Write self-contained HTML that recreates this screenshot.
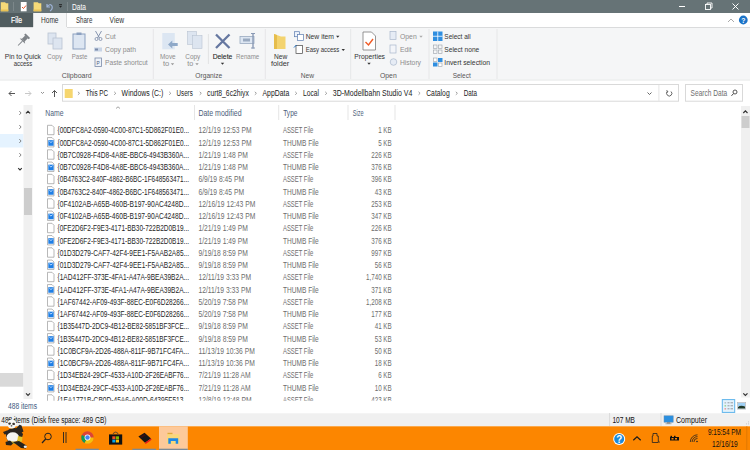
<!DOCTYPE html>
<html><head><meta charset="utf-8"><style>
html,body{margin:0;padding:0;width:750px;height:450px;overflow:hidden;background:#fff}
svg{display:block;font-family:"Liberation Sans", sans-serif}
</style></head><body>
<svg width="750" height="450" viewBox="0 0 750 450">
<rect x="0" y="0" width="750" height="13" fill="#667376" />
<path d="M0.8 2.3 L5 2.3 L6 3.3 L8.3 3.3 L8.3 11.3 L0.8 11.3 Z" fill="#f7da78"/><rect x="0.8" y="9.5" width="7.5" height="1.8" fill="#e9c255"/>
<line x1="13.5" y1="2" x2="13.5" y2="11" stroke="#7c878a" stroke-width="1" />
<rect x="20.8" y="2" width="5.8" height="9.3" fill="#ffffff" />
<path d="M22 7 L23.5 8.5 L26 5.5" stroke="#e8562a" stroke-width="1" fill="none"/>
<path d="M33.6 2.3 L37.8 2.3 L38.8 3.3 L41.3 3.3 L41.3 11.3 L33.6 11.3 Z" fill="#f7da78"/><rect x="33.6" y="9.5" width="7.7" height="1.8" fill="#e9c255"/>
<path d="M47 4 L47 7 L50 7 M47 7 Q50 3 52 6 Q53 9 50 11" stroke="#9fb4d8" stroke-width="1.2" fill="none"/>
<path d="M58.80 5.80 L62.20 5.80 L60.50 7.80 Z" fill="#222"/>
<line x1="59" y1="4.5" x2="62" y2="4.5" stroke="#222" stroke-width="0.8" />
<line x1="67.5" y1="2" x2="67.5" y2="11" stroke="#7c878a" stroke-width="1" />
<text x="72.00" y="10" font-size="8.3" fill="#ffffff" font-weight="normal"  textLength="14.00" lengthAdjust="spacingAndGlyphs" >Data</text>
<line x1="679" y1="6.5" x2="685" y2="6.5" stroke="#ffffff" stroke-width="1" />
<rect x="705.5" y="4.5" width="5" height="5" fill="none" stroke="#fff" stroke-width="0.9"/><path d="M707 4.5 V3 H712 V8 H710.5" fill="none" stroke="#fff" stroke-width="0.9"/>
<path d="M732.5 3.5 L738.5 9.5 M738.5 3.5 L732.5 9.5" stroke="#fff" stroke-width="1"/>
<rect x="0" y="13" width="750" height="14" fill="#ffffff" />
<rect x="0" y="13" width="33" height="14" fill="#505c5f" />
<text x="11.00" y="22.8" font-size="8.3" fill="#ffffff" font-weight="normal" stroke="#ffffff" stroke-width="0.2" textLength="11.00" lengthAdjust="spacingAndGlyphs" >File</text>
<rect x="33" y="13" width="34" height="15" fill="#f5f6f7" />
<line x1="33.5" y1="13" x2="33.5" y2="27" stroke="#dadbdc" stroke-width="1" />
<line x1="66.5" y1="13" x2="66.5" y2="27" stroke="#dadbdc" stroke-width="1" />
<text x="41.00" y="22.8" font-size="8.3" fill="#333333" font-weight="normal"  textLength="17.50" lengthAdjust="spacingAndGlyphs" >Home</text>
<text x="76.00" y="22.8" font-size="8.3" fill="#333333" font-weight="normal"  textLength="16.30" lengthAdjust="spacingAndGlyphs" >Share</text>
<text x="109.60" y="22.8" font-size="8.3" fill="#333333" font-weight="normal"  textLength="14.40" lengthAdjust="spacingAndGlyphs" >View</text>
<path d="M728 22 L731 19 L734 22" stroke="#a0a0a0" stroke-width="0.9" fill="none"/>
<circle cx="743.3" cy="20" r="4.4" fill="#1a73c8"/>
<text x="741.20" y="23" font-size="7" fill="#ffffff" font-weight="bold"  textLength="4.20" lengthAdjust="spacingAndGlyphs" >?</text>
<rect x="0" y="27" width="750" height="53" fill="#f5f6f7" />
<line x1="0" y1="27.5" x2="33" y2="27.5" stroke="#dadbdc" stroke-width="1" />
<line x1="67" y1="27.5" x2="750" y2="27.5" stroke="#dadbdc" stroke-width="1" />
<line x1="0" y1="80.2" x2="750" y2="80.2" stroke="#e3e4e5" stroke-width="1" />
<line x1="153.3" y1="29" x2="153.3" y2="79" stroke="#e6e7e8" stroke-width="1" />
<line x1="265.3" y1="29" x2="265.3" y2="79" stroke="#e6e7e8" stroke-width="1" />
<line x1="350.7" y1="29" x2="350.7" y2="79" stroke="#e6e7e8" stroke-width="1" />
<line x1="429" y1="29" x2="429" y2="79" stroke="#e6e7e8" stroke-width="1" />
<line x1="497" y1="29" x2="497" y2="79" stroke="#e6e7e8" stroke-width="1" />
<text x="61.70" y="78.1" font-size="7.7" fill="#555" font-weight="normal"  textLength="30.00" lengthAdjust="spacingAndGlyphs" >Clipboard</text>
<text x="195.30" y="78.1" font-size="7.7" fill="#555" font-weight="normal"  textLength="27.00" lengthAdjust="spacingAndGlyphs" >Organize</text>
<text x="300.70" y="78.1" font-size="7.7" fill="#555" font-weight="normal"  textLength="13.30" lengthAdjust="spacingAndGlyphs" >New</text>
<text x="380.00" y="78.1" font-size="7.7" fill="#555" font-weight="normal"  textLength="16.70" lengthAdjust="spacingAndGlyphs" >Open</text>
<text x="452.70" y="78.1" font-size="7.7" fill="#555" font-weight="normal"  textLength="18.00" lengthAdjust="spacingAndGlyphs" >Select</text>
<g transform="translate(23,40.5) rotate(45)" fill="#7d8287"><rect x="-3.2" y="-6.8" width="6.4" height="2"/><rect x="-1.9" y="-5" width="3.8" height="4.6"/><path d="M-3.8 0.8 L3.8 0.8 L1.9 -0.6 L-1.9 -0.6 Z"/><rect x="-0.45" y="0.8" width="0.9" height="6.2"/></g>
<text x="4.70" y="59.0" font-size="7.7" fill="#333" font-weight="normal"  textLength="36.30" lengthAdjust="spacingAndGlyphs" >Pin to Quick</text>
<text x="13.70" y="66.4" font-size="7.7" fill="#333" font-weight="normal"  textLength="18.60" lengthAdjust="spacingAndGlyphs" >access</text>
<rect x="48" y="33" width="8" height="11" fill="#dde5f0" stroke="#b9c4d2" stroke-width="0.8"/>
<rect x="53" y="38" width="9" height="11" fill="#dde5f0" stroke="#b9c4d2" stroke-width="0.8"/>
<text x="47.00" y="59.0" font-size="7.7" fill="#8d8d8d" font-weight="normal"  textLength="15.30" lengthAdjust="spacingAndGlyphs" >Copy</text>
<rect x="73" y="34" width="12" height="15" fill="#dde6f2" stroke="#8ba0c0" stroke-width="1"/>
<rect x="76.5" y="32.5" width="5" height="2.5" fill="#8ba0c0" />
<text x="71.70" y="59.0" font-size="7.7" fill="#8d8d8d" font-weight="normal"  textLength="15.60" lengthAdjust="spacingAndGlyphs" >Paste</text>
<path d="M95.5 31 L99.5 38 M101.5 31 L97.5 38" stroke="#7a8aa8" stroke-width="0.9"/><circle cx="96.5" cy="39" r="1.5" fill="none" stroke="#7a8aa8" stroke-width="0.8"/><circle cx="100.5" cy="39" r="1.5" fill="none" stroke="#7a8aa8" stroke-width="0.8"/>
<text x="105.00" y="38.8" font-size="7.7" fill="#8d8d8d" font-weight="normal"  textLength="10.70" lengthAdjust="spacingAndGlyphs" >Cut</text>
<rect x="94" y="47.5" width="8" height="4" fill="#c8d4e6" />
<rect x="95" y="48.5" width="3" height="2" fill="#7a8aa8" />
<text x="105.00" y="52.1" font-size="7.7" fill="#8d8d8d" font-weight="normal"  textLength="31.00" lengthAdjust="spacingAndGlyphs" >Copy path</text>
<rect x="95" y="58" width="6.5" height="8.5" fill="#eef2f8" stroke="#7a8aa8" stroke-width="0.8"/>
<text x="96.60" y="64.5" font-size="5.5" fill="#4a5a7a" font-weight="normal"  textLength="3.20" lengthAdjust="spacingAndGlyphs" >P</text>
<text x="105.00" y="64.9" font-size="7.7" fill="#8d8d8d" font-weight="normal"  textLength="42.70" lengthAdjust="spacingAndGlyphs" >Paste shortcut</text>
<rect x="162.3" y="33" width="12.5" height="16.3" fill="#dce6f2" />
<path d="M168 44.5 L172.3 40.5 L172.3 43 L177.7 43 L177.7 46 L172.3 46 L172.3 48.5 Z" fill="#8fa9c8"/>
<text x="160.00" y="59.0" font-size="7.7" fill="#8d8d8d" font-weight="normal"  textLength="15.70" lengthAdjust="spacingAndGlyphs" >Move</text>
<text x="163.00" y="66.4" font-size="7.7" fill="#8d8d8d" font-weight="normal"  textLength="6.30" lengthAdjust="spacingAndGlyphs" >to</text>
<path d="M170.80 63.30 L174.20 63.30 L172.50 65.30 Z" fill="#999"/>
<rect x="187.5" y="31.5" width="9" height="13" fill="#dde5f0" stroke="#b9c4d2" stroke-width="0.6"/>
<rect x="192.5" y="35.5" width="9.5" height="13" fill="#dde5f0" stroke="#b9c4d2" stroke-width="0.6"/>
<text x="185.30" y="59.0" font-size="7.7" fill="#8d8d8d" font-weight="normal"  textLength="15.00" lengthAdjust="spacingAndGlyphs" >Copy</text>
<text x="187.30" y="66.4" font-size="7.7" fill="#8d8d8d" font-weight="normal"  textLength="6.00" lengthAdjust="spacingAndGlyphs" >to</text>
<path d="M195.30 63.30 L198.70 63.30 L197.00 65.30 Z" fill="#999"/>
<line x1="208.4" y1="34" x2="208.4" y2="64" stroke="#e2e3e4" stroke-width="1" />
<path d="M216 34.5 L229.5 48 M229.5 34.5 L216 48" stroke="#6577a0" stroke-width="2.3"/>
<text x="212.70" y="59.0" font-size="7.7" fill="#222" font-weight="normal" stroke="#222" stroke-width="0.1" textLength="19.60" lengthAdjust="spacingAndGlyphs" >Delete</text>
<path d="M220.80 62.80 L224.20 62.80 L222.50 64.80 Z" fill="#333"/>
<rect x="240" y="36.5" width="14" height="7" fill="#dde6f2" stroke="#9aaac0" stroke-width="0.8"/>
<rect x="243" y="38.5" width="7" height="3" fill="#9aaac0" />
<line x1="253" y1="33" x2="253" y2="48.5" stroke="#8a9ab5" stroke-width="1.4" />
<line x1="251" y1="33.5" x2="255" y2="33.5" stroke="#8a9ab5" stroke-width="1" />
<line x1="251" y1="48" x2="255" y2="48" stroke="#8a9ab5" stroke-width="1" />
<text x="236.00" y="59.0" font-size="7.7" fill="#8d8d8d" font-weight="normal"  textLength="23.30" lengthAdjust="spacingAndGlyphs" >Rename</text>
<path d="M274 34 L281 36.5 L285.5 36.5 L285.5 49 L274 49 Z" fill="#f3d36f"/><path d="M274 34 L277 35 L277 49 L274 49 Z" fill="#e6bd4c"/>
<text x="274.00" y="59.0" font-size="7.7" fill="#333" font-weight="normal"  textLength="13.30" lengthAdjust="spacingAndGlyphs" >New</text>
<text x="271.00" y="66.4" font-size="7.7" fill="#333" font-weight="normal"  textLength="18.30" lengthAdjust="spacingAndGlyphs" >folder</text>
<rect x="294.5" y="31.7" width="5" height="5" fill="#eef3fb" stroke="#5a7bb0" stroke-width="0.7"/>
<rect x="297.5" y="34.5" width="6" height="6" fill="#ffffff" stroke="#5a7bb0" stroke-width="0.7"/>
<text x="305.70" y="38.8" font-size="7.7" fill="#333" font-weight="normal"  textLength="28.30" lengthAdjust="spacingAndGlyphs" >New item</text>
<path d="M336.05 35.80 L339.45 35.80 L337.75 37.80 Z" fill="#333"/>
<rect x="296" y="45.5" width="6.5" height="8" fill="#ffffff" stroke="#444" stroke-width="0.7"/>
<path d="M294 47.5 L296.5 45" stroke="#1b6fc8" stroke-width="1"/>
<text x="305.70" y="52.1" font-size="7.7" fill="#333" font-weight="normal"  textLength="33.60" lengthAdjust="spacingAndGlyphs" >Easy access</text>
<path d="M341.55 49.00 L344.95 49.00 L343.25 51.00 Z" fill="#333"/>
<path d="M363 32 L371.5 32 L375.5 36 L375.5 50 L363 50 Z" fill="#fff" stroke="#7c7c7c" stroke-width="0.8"/><path d="M365.5 42 L368.5 45 L373 39" stroke="#f05a24" stroke-width="1.4" fill="none"/>
<text x="354.30" y="59.0" font-size="7.7" fill="#333" font-weight="normal"  textLength="30.70" lengthAdjust="spacingAndGlyphs" >Properties</text>
<path d="M367.30 62.80 L370.70 62.80 L369.00 64.80 Z" fill="#333"/>
<rect x="390" y="31.5" width="6" height="8" fill="#e6ecf5" stroke="#a9b7cc" stroke-width="0.7"/>
<text x="400.00" y="38.8" font-size="7.7" fill="#8d8d8d" font-weight="normal"  textLength="16.70" lengthAdjust="spacingAndGlyphs" >Open</text>
<path d="M419.30 35.80 L422.70 35.80 L421.00 37.80 Z" fill="#aaa"/>
<rect x="390" y="45" width="6" height="8" fill="#f3f5f9" stroke="#a9b7cc" stroke-width="0.7"/>
<text x="400.00" y="52.1" font-size="7.7" fill="#8d8d8d" font-weight="normal"  textLength="11.70" lengthAdjust="spacingAndGlyphs" >Edit</text>
<circle cx="393.5" cy="62" r="3.3" fill="#e6ecf5" stroke="#a9b7cc" stroke-width="0.7"/>
<text x="400.00" y="64.9" font-size="7.7" fill="#8d8d8d" font-weight="normal"  textLength="21.00" lengthAdjust="spacingAndGlyphs" >History</text>
<rect x="433" y="31.5" width="9.5" height="9.5" fill="#2f8ee0" />
<line x1="437.75" y1="31.5" x2="437.75" y2="41" stroke="#fff" stroke-width="0.8" />
<line x1="433" y1="36.25" x2="442.5" y2="36.25" stroke="#fff" stroke-width="0.8" />
<text x="444.30" y="38.8" font-size="7.7" fill="#333" font-weight="normal"  textLength="26.40" lengthAdjust="spacingAndGlyphs" >Select all</text>
<g stroke="#9aa0a8" stroke-width="0.6" fill="none"><rect x="433.5" y="45" width="3.5" height="3.5"/><rect x="438.5" y="45" width="3.5" height="3.5"/><rect x="433.5" y="50" width="3.5" height="3.5"/><rect x="438.5" y="50" width="3.5" height="3.5"/></g>
<text x="444.30" y="52.1" font-size="7.7" fill="#333" font-weight="normal"  textLength="35.00" lengthAdjust="spacingAndGlyphs" >Select none</text>
<g><rect x="433.5" y="58" width="3.5" height="3.5" fill="#fff" stroke="#9aa0a8" stroke-width="0.6"/><rect x="438" y="58" width="4.5" height="4" fill="#2f8ee0"/><rect x="433" y="62.5" width="4.5" height="4" fill="#2f8ee0"/><rect x="438.5" y="63" width="3.5" height="3.5" fill="#fff" stroke="#9aa0a8" stroke-width="0.6"/></g>
<text x="444.30" y="64.9" font-size="7.7" fill="#333" font-weight="normal"  textLength="45.70" lengthAdjust="spacingAndGlyphs" >Invert selection</text>
<rect x="0" y="80.7" width="750" height="23.3" fill="#ffffff" />
<path d="M9 93.5 L15 93.5 M11.5 91 L9 93.5 L11.5 96" stroke="#555" stroke-width="1" fill="none"/>
<path d="M25 93.5 L31 93.5 M28.5 91 L31 93.5 L28.5 96" stroke="#c8c8c8" stroke-width="1" fill="none"/>
<path d="M41 92 L42.5 93.5 L44 92" stroke="#777" stroke-width="0.8" fill="none"/>
<path d="M54.5 97 L54.5 90.5 M52 93 L54.5 90.5 L57 93" stroke="#555" stroke-width="1" fill="none"/>
<rect x="62.5" y="84.5" width="616" height="16.7" fill="#ffffff" stroke="#d9d9d9" stroke-width="1"/>
<rect x="64.7" y="89" width="8" height="9" fill="#f6d66f" />
<path d="M77.9 91.8 L79.5 93.3 L77.9 94.8" stroke="#777" stroke-width="0.7" fill="none"/>
<path d="M114.2 91.8 L115.8 93.3 L114.2 94.8" stroke="#777" stroke-width="0.7" fill="none"/>
<path d="M169.2 91.8 L170.8 93.3 L169.2 94.8" stroke="#777" stroke-width="0.7" fill="none"/>
<path d="M199.7 91.8 L201.3 93.3 L199.7 94.8" stroke="#777" stroke-width="0.7" fill="none"/>
<path d="M254.79999999999998 91.8 L256.4 93.3 L254.79999999999998 94.8" stroke="#777" stroke-width="0.7" fill="none"/>
<path d="M295.2 91.8 L296.8 93.3 L295.2 94.8" stroke="#777" stroke-width="0.7" fill="none"/>
<path d="M325.2 91.8 L326.8 93.3 L325.2 94.8" stroke="#777" stroke-width="0.7" fill="none"/>
<path d="M418.5 91.8 L420.1 93.3 L418.5 94.8" stroke="#777" stroke-width="0.7" fill="none"/>
<path d="M455.8 91.8 L457.40000000000003 93.3 L455.8 94.8" stroke="#777" stroke-width="0.7" fill="none"/>
<text x="85.70" y="96" font-size="8.3" fill="#222" font-weight="normal"  textLength="22.40" lengthAdjust="spacingAndGlyphs" >This PC</text>
<text x="121.60" y="96" font-size="8.3" fill="#222" font-weight="normal"  textLength="41.60" lengthAdjust="spacingAndGlyphs" >Windows (C:)</text>
<text x="176.60" y="96" font-size="8.3" fill="#222" font-weight="normal"  textLength="16.20" lengthAdjust="spacingAndGlyphs" >Users</text>
<text x="207.00" y="96" font-size="8.3" fill="#222" font-weight="normal"  textLength="41.90" lengthAdjust="spacingAndGlyphs" >curt8_6c2hiyx</text>
<text x="262.50" y="96" font-size="8.3" fill="#222" font-weight="normal"  textLength="26.70" lengthAdjust="spacingAndGlyphs" >AppData</text>
<text x="303.00" y="96" font-size="8.3" fill="#222" font-weight="normal"  textLength="16.00" lengthAdjust="spacingAndGlyphs" >Local</text>
<text x="332.80" y="96" font-size="8.3" fill="#222" font-weight="normal"  textLength="79.60" lengthAdjust="spacingAndGlyphs" >3D-Modellbahn Studio V4</text>
<text x="426.20" y="96" font-size="8.3" fill="#222" font-weight="normal"  textLength="23.50" lengthAdjust="spacingAndGlyphs" >Catalog</text>
<text x="463.70" y="96" font-size="8.3" fill="#222" font-weight="normal"  textLength="13.30" lengthAdjust="spacingAndGlyphs" >Data</text>
<path d="M647.5 92.5 L649.5 94.5 L651.5 92.5" stroke="#555" stroke-width="0.9" fill="none"/>
<line x1="658.9" y1="85" x2="658.9" y2="101" stroke="#e5e5e5" stroke-width="1" />
<path d="M671 91.5 A2.6 2.6 0 1 1 667.5 91.5" stroke="#555" stroke-width="0.9" fill="none"/><path d="M666.5 90 L668 91.8 L666 92.3" stroke="#555" stroke-width="0.8" fill="none"/>
<rect x="685.5" y="84.5" width="57" height="16.7" fill="#ffffff" stroke="#d9d9d9" stroke-width="1"/>
<text x="690.60" y="96" font-size="8.3" fill="#6d6d6d" font-weight="normal"  textLength="36.60" lengthAdjust="spacingAndGlyphs" >Search Data</text>
<circle cx="735" cy="92" r="2" fill="none" stroke="#444" stroke-width="0.9"/><path d="M733.5 93.6 L731.5 95.8" stroke="#444" stroke-width="1"/>
<rect x="0" y="104" width="750" height="309" fill="#ffffff" />
<rect x="0" y="134" width="23.5" height="13.5" fill="#e5f3ff" />
<path d="M19.3 111.1 L21.1 113 L19.3 114.9" stroke="#777" stroke-width="0.9" fill="none"/>
<path d="M19.3 125.1 L21.1 127 L19.3 128.9" stroke="#777" stroke-width="0.9" fill="none"/>
<path d="M19.3 139.1 L21.1 141 L19.3 142.9" stroke="#777" stroke-width="0.9" fill="none"/>
<path d="M19.3 153.1 L21.1 155 L19.3 156.9" stroke="#777" stroke-width="0.9" fill="none"/>
<path d="M18.2 168.2 L20 170 L21.8 168.2" stroke="#333" stroke-width="1.1" fill="none"/>
<rect x="0" y="373" width="23.5" height="13.7" fill="#d9d9d9" />
<rect x="23.5" y="105" width="9" height="294" fill="#f0f0f0" />
<path d="M26 113.3 L28 111.3 L30 113.3" stroke="#333" stroke-width="1.2" fill="none"/>
<rect x="24" y="188" width="8" height="27" fill="#cdcdcd" />
<path d="M26 393.3 L28 395.3 L30 393.3" stroke="#333" stroke-width="1.2" fill="none"/>
<text x="45.30" y="116.2" font-size="8.3" fill="#4c607a" font-weight="normal"  textLength="18.20" lengthAdjust="spacingAndGlyphs" >Name</text>
<path d="M116 108.5 L118 106.8 L120 108.5" stroke="#8a8a8a" stroke-width="0.8" fill="none"/>
<line x1="194.5" y1="105" x2="194.5" y2="120" stroke="#e5e5e5" stroke-width="1" />
<text x="198.40" y="116.2" font-size="8.3" fill="#4c607a" font-weight="normal"  textLength="43.20" lengthAdjust="spacingAndGlyphs" >Date modified</text>
<line x1="278.7" y1="105" x2="278.7" y2="120" stroke="#e5e5e5" stroke-width="1" />
<text x="283.20" y="116.2" font-size="8.3" fill="#4c607a" font-weight="normal"  textLength="14.30" lengthAdjust="spacingAndGlyphs" >Type</text>
<line x1="348" y1="105" x2="348" y2="120" stroke="#e5e5e5" stroke-width="1" />
<text x="352.70" y="116.2" font-size="8.3" fill="#4c607a" font-weight="normal"  textLength="10.80" lengthAdjust="spacingAndGlyphs" >Size</text>
<line x1="395" y1="105" x2="395" y2="120" stroke="#e5e5e5" stroke-width="1" />
<defs><clipPath id="lc"><rect x="33" y="121" width="707" height="279.7"/></clipPath></defs><g clip-path="url(#lc)">
<path d="M47.5 125.30000000000001 L52 125.30000000000001 L54 127.30000000000001 L54 134.70000000000002 L47.5 134.70000000000002 Z" fill="#fff" stroke="#9a9a9a" stroke-width="0.7"/>
<text x="57.50" y="133.3" font-size="8.3" fill="#262626" font-weight="normal"  textLength="131.50" lengthAdjust="spacingAndGlyphs" >{00DFC8A2-0590-4C00-87C1-5D862F01E0...</text>
<text x="198.40" y="133.3" font-size="8.3" fill="#6d6d6d" font-weight="normal"  textLength="53.16" lengthAdjust="spacingAndGlyphs" >12/1/19 12:53 PM</text>
<text x="283.00" y="133.3" font-size="8.3" fill="#6d6d6d" font-weight="normal"  textLength="30.30" lengthAdjust="spacingAndGlyphs" >ASSET File</text>
<text x="378.18" y="133.3" font-size="8.3" fill="#6d6d6d" font-weight="normal"  textLength="13.52" lengthAdjust="spacingAndGlyphs" >1 KB</text>
<path d="M47.5 137.55 L52 137.55 L54 139.55 L54 146.95000000000002 L47.5 146.95000000000002 Z" fill="#fff" stroke="#9a9a9a" stroke-width="0.7"/><rect x="48.3" y="140.15" width="5.3" height="5.6" fill="#1f7fe6"/><path d="M49.3 141.15 L50.95 142.55 L52.6 141.15" stroke="#fff" stroke-width="0.7" fill="none"/>
<text x="57.50" y="145.55" font-size="8.3" fill="#262626" font-weight="normal"  textLength="131.50" lengthAdjust="spacingAndGlyphs" >{00DFC8A2-0590-4C00-87C1-5D862F01E0...</text>
<text x="198.40" y="145.55" font-size="8.3" fill="#6d6d6d" font-weight="normal"  textLength="53.16" lengthAdjust="spacingAndGlyphs" >12/1/19 12:53 PM</text>
<text x="283.00" y="145.55" font-size="8.3" fill="#6d6d6d" font-weight="normal"  textLength="35.70" lengthAdjust="spacingAndGlyphs" >THUMB File</text>
<text x="378.18" y="145.55" font-size="8.3" fill="#6d6d6d" font-weight="normal"  textLength="13.52" lengthAdjust="spacingAndGlyphs" >5 KB</text>
<path d="M47.5 149.8 L52 149.8 L54 151.8 L54 159.20000000000002 L47.5 159.20000000000002 Z" fill="#fff" stroke="#9a9a9a" stroke-width="0.7"/>
<text x="57.50" y="157.8" font-size="8.3" fill="#262626" font-weight="normal"  textLength="131.50" lengthAdjust="spacingAndGlyphs" >{0B7C0928-F4D8-4A8E-BBC6-4943B360A...</text>
<text x="198.40" y="157.8" font-size="8.3" fill="#6d6d6d" font-weight="normal"  textLength="49.41" lengthAdjust="spacingAndGlyphs" >1/21/19 1:48 PM</text>
<text x="283.00" y="157.8" font-size="8.3" fill="#6d6d6d" font-weight="normal"  textLength="30.30" lengthAdjust="spacingAndGlyphs" >ASSET File</text>
<text x="371.24" y="157.8" font-size="8.3" fill="#6d6d6d" font-weight="normal"  textLength="20.46" lengthAdjust="spacingAndGlyphs" >226 KB</text>
<path d="M47.5 162.05 L52 162.05 L54 164.05 L54 171.45000000000002 L47.5 171.45000000000002 Z" fill="#fff" stroke="#9a9a9a" stroke-width="0.7"/><rect x="48.3" y="164.65" width="5.3" height="5.6" fill="#1f7fe6"/><path d="M49.3 165.65 L50.95 167.05 L52.6 165.65" stroke="#fff" stroke-width="0.7" fill="none"/>
<text x="57.50" y="170.05" font-size="8.3" fill="#262626" font-weight="normal"  textLength="131.50" lengthAdjust="spacingAndGlyphs" >{0B7C0928-F4D8-4A8E-BBC6-4943B360A...</text>
<text x="198.40" y="170.05" font-size="8.3" fill="#6d6d6d" font-weight="normal"  textLength="49.41" lengthAdjust="spacingAndGlyphs" >1/21/19 1:48 PM</text>
<text x="283.00" y="170.05" font-size="8.3" fill="#6d6d6d" font-weight="normal"  textLength="35.70" lengthAdjust="spacingAndGlyphs" >THUMB File</text>
<text x="371.24" y="170.05" font-size="8.3" fill="#6d6d6d" font-weight="normal"  textLength="20.46" lengthAdjust="spacingAndGlyphs" >376 KB</text>
<path d="M47.5 174.3 L52 174.3 L54 176.3 L54 183.70000000000002 L47.5 183.70000000000002 Z" fill="#fff" stroke="#9a9a9a" stroke-width="0.7"/>
<text x="57.50" y="182.3" font-size="8.3" fill="#262626" font-weight="normal"  textLength="131.50" lengthAdjust="spacingAndGlyphs" >{0B4763C2-840F-4862-B6BC-1F648563471...</text>
<text x="198.40" y="182.3" font-size="8.3" fill="#6d6d6d" font-weight="normal"  textLength="45.67" lengthAdjust="spacingAndGlyphs" >6/9/19 8:45 PM</text>
<text x="283.00" y="182.3" font-size="8.3" fill="#6d6d6d" font-weight="normal"  textLength="30.30" lengthAdjust="spacingAndGlyphs" >ASSET File</text>
<text x="371.24" y="182.3" font-size="8.3" fill="#6d6d6d" font-weight="normal"  textLength="20.46" lengthAdjust="spacingAndGlyphs" >396 KB</text>
<path d="M47.5 186.55 L52 186.55 L54 188.55 L54 195.95000000000002 L47.5 195.95000000000002 Z" fill="#fff" stroke="#9a9a9a" stroke-width="0.7"/><rect x="48.3" y="189.15" width="5.3" height="5.6" fill="#1f7fe6"/><path d="M49.3 190.15 L50.95 191.55 L52.6 190.15" stroke="#fff" stroke-width="0.7" fill="none"/>
<text x="57.50" y="194.55" font-size="8.3" fill="#262626" font-weight="normal"  textLength="131.50" lengthAdjust="spacingAndGlyphs" >{0B4763C2-840F-4862-B6BC-1F648563471...</text>
<text x="198.40" y="194.55" font-size="8.3" fill="#6d6d6d" font-weight="normal"  textLength="45.67" lengthAdjust="spacingAndGlyphs" >6/9/19 8:45 PM</text>
<text x="283.00" y="194.55" font-size="8.3" fill="#6d6d6d" font-weight="normal"  textLength="35.70" lengthAdjust="spacingAndGlyphs" >THUMB File</text>
<text x="374.71" y="194.55" font-size="8.3" fill="#6d6d6d" font-weight="normal"  textLength="16.99" lengthAdjust="spacingAndGlyphs" >43 KB</text>
<path d="M47.5 198.8 L52 198.8 L54 200.8 L54 208.20000000000002 L47.5 208.20000000000002 Z" fill="#fff" stroke="#9a9a9a" stroke-width="0.7"/>
<text x="57.50" y="206.8" font-size="8.3" fill="#262626" font-weight="normal"  textLength="131.50" lengthAdjust="spacingAndGlyphs" >{0F4102AB-A65B-460B-B197-90AC4248D...</text>
<text x="198.40" y="206.8" font-size="8.3" fill="#6d6d6d" font-weight="normal"  textLength="56.90" lengthAdjust="spacingAndGlyphs" >12/16/19 12:43 PM</text>
<text x="283.00" y="206.8" font-size="8.3" fill="#6d6d6d" font-weight="normal"  textLength="30.30" lengthAdjust="spacingAndGlyphs" >ASSET File</text>
<text x="371.24" y="206.8" font-size="8.3" fill="#6d6d6d" font-weight="normal"  textLength="20.46" lengthAdjust="spacingAndGlyphs" >253 KB</text>
<path d="M47.5 211.05 L52 211.05 L54 213.05 L54 220.45000000000002 L47.5 220.45000000000002 Z" fill="#fff" stroke="#9a9a9a" stroke-width="0.7"/><rect x="48.3" y="213.65" width="5.3" height="5.6" fill="#1f7fe6"/><path d="M49.3 214.65 L50.95 216.05 L52.6 214.65" stroke="#fff" stroke-width="0.7" fill="none"/>
<text x="57.50" y="219.05" font-size="8.3" fill="#262626" font-weight="normal"  textLength="131.50" lengthAdjust="spacingAndGlyphs" >{0F4102AB-A65B-460B-B197-90AC4248D...</text>
<text x="198.40" y="219.05" font-size="8.3" fill="#6d6d6d" font-weight="normal"  textLength="56.90" lengthAdjust="spacingAndGlyphs" >12/16/19 12:43 PM</text>
<text x="283.00" y="219.05" font-size="8.3" fill="#6d6d6d" font-weight="normal"  textLength="35.70" lengthAdjust="spacingAndGlyphs" >THUMB File</text>
<text x="371.24" y="219.05" font-size="8.3" fill="#6d6d6d" font-weight="normal"  textLength="20.46" lengthAdjust="spacingAndGlyphs" >347 KB</text>
<path d="M47.5 223.3 L52 223.3 L54 225.3 L54 232.70000000000002 L47.5 232.70000000000002 Z" fill="#fff" stroke="#9a9a9a" stroke-width="0.7"/>
<text x="57.50" y="231.3" font-size="8.3" fill="#262626" font-weight="normal"  textLength="131.50" lengthAdjust="spacingAndGlyphs" >{0FE2D6F2-F9E3-4171-BB30-722B2D0B19...</text>
<text x="198.40" y="231.3" font-size="8.3" fill="#6d6d6d" font-weight="normal"  textLength="49.41" lengthAdjust="spacingAndGlyphs" >1/21/19 1:49 PM</text>
<text x="283.00" y="231.3" font-size="8.3" fill="#6d6d6d" font-weight="normal"  textLength="30.30" lengthAdjust="spacingAndGlyphs" >ASSET File</text>
<text x="371.24" y="231.3" font-size="8.3" fill="#6d6d6d" font-weight="normal"  textLength="20.46" lengthAdjust="spacingAndGlyphs" >226 KB</text>
<path d="M47.5 235.55 L52 235.55 L54 237.55 L54 244.95000000000002 L47.5 244.95000000000002 Z" fill="#fff" stroke="#9a9a9a" stroke-width="0.7"/><rect x="48.3" y="238.15" width="5.3" height="5.6" fill="#1f7fe6"/><path d="M49.3 239.15 L50.95 240.55 L52.6 239.15" stroke="#fff" stroke-width="0.7" fill="none"/>
<text x="57.50" y="243.55" font-size="8.3" fill="#262626" font-weight="normal"  textLength="131.50" lengthAdjust="spacingAndGlyphs" >{0FE2D6F2-F9E3-4171-BB30-722B2D0B19...</text>
<text x="198.40" y="243.55" font-size="8.3" fill="#6d6d6d" font-weight="normal"  textLength="49.41" lengthAdjust="spacingAndGlyphs" >1/21/19 1:49 PM</text>
<text x="283.00" y="243.55" font-size="8.3" fill="#6d6d6d" font-weight="normal"  textLength="35.70" lengthAdjust="spacingAndGlyphs" >THUMB File</text>
<text x="371.24" y="243.55" font-size="8.3" fill="#6d6d6d" font-weight="normal"  textLength="20.46" lengthAdjust="spacingAndGlyphs" >376 KB</text>
<path d="M47.5 247.8 L52 247.8 L54 249.8 L54 257.2 L47.5 257.2 Z" fill="#fff" stroke="#9a9a9a" stroke-width="0.7"/>
<text x="57.50" y="255.8" font-size="8.3" fill="#262626" font-weight="normal"  textLength="131.50" lengthAdjust="spacingAndGlyphs" >{01D3D279-CAF7-42F4-9EE1-F5AAB2A85...</text>
<text x="198.40" y="255.8" font-size="8.3" fill="#6d6d6d" font-weight="normal"  textLength="49.41" lengthAdjust="spacingAndGlyphs" >9/19/18 8:59 PM</text>
<text x="283.00" y="255.8" font-size="8.3" fill="#6d6d6d" font-weight="normal"  textLength="30.30" lengthAdjust="spacingAndGlyphs" >ASSET File</text>
<text x="371.24" y="255.8" font-size="8.3" fill="#6d6d6d" font-weight="normal"  textLength="20.46" lengthAdjust="spacingAndGlyphs" >997 KB</text>
<path d="M47.5 260.05 L52 260.05 L54 262.05 L54 269.45 L47.5 269.45 Z" fill="#fff" stroke="#9a9a9a" stroke-width="0.7"/><rect x="48.3" y="262.65000000000003" width="5.3" height="5.6" fill="#1f7fe6"/><path d="M49.3 263.65000000000003 L50.95 265.05 L52.6 263.65000000000003" stroke="#fff" stroke-width="0.7" fill="none"/>
<text x="57.50" y="268.05" font-size="8.3" fill="#262626" font-weight="normal"  textLength="131.50" lengthAdjust="spacingAndGlyphs" >{01D3D279-CAF7-42F4-9EE1-F5AAB2A85...</text>
<text x="198.40" y="268.05" font-size="8.3" fill="#6d6d6d" font-weight="normal"  textLength="49.41" lengthAdjust="spacingAndGlyphs" >9/19/18 8:59 PM</text>
<text x="283.00" y="268.05" font-size="8.3" fill="#6d6d6d" font-weight="normal"  textLength="35.70" lengthAdjust="spacingAndGlyphs" >THUMB File</text>
<text x="374.71" y="268.05" font-size="8.3" fill="#6d6d6d" font-weight="normal"  textLength="16.99" lengthAdjust="spacingAndGlyphs" >56 KB</text>
<path d="M47.5 272.3 L52 272.3 L54 274.3 L54 281.7 L47.5 281.7 Z" fill="#fff" stroke="#9a9a9a" stroke-width="0.7"/>
<text x="57.50" y="280.3" font-size="8.3" fill="#262626" font-weight="normal"  textLength="131.50" lengthAdjust="spacingAndGlyphs" >{1AD412FF-373E-4FA1-A47A-9BEA39B2A...</text>
<text x="198.40" y="280.3" font-size="8.3" fill="#6d6d6d" font-weight="normal"  textLength="52.66" lengthAdjust="spacingAndGlyphs" >12/11/19 3:33 PM</text>
<text x="283.00" y="280.3" font-size="8.3" fill="#6d6d6d" font-weight="normal"  textLength="30.30" lengthAdjust="spacingAndGlyphs" >ASSET File</text>
<text x="366.04" y="280.3" font-size="8.3" fill="#6d6d6d" font-weight="normal"  textLength="25.66" lengthAdjust="spacingAndGlyphs" >1,740 KB</text>
<path d="M47.5 284.55 L52 284.55 L54 286.55 L54 293.95 L47.5 293.95 Z" fill="#fff" stroke="#9a9a9a" stroke-width="0.7"/><rect x="48.3" y="287.15000000000003" width="5.3" height="5.6" fill="#1f7fe6"/><path d="M49.3 288.15000000000003 L50.95 289.55 L52.6 288.15000000000003" stroke="#fff" stroke-width="0.7" fill="none"/>
<text x="57.50" y="292.55" font-size="8.3" fill="#262626" font-weight="normal"  textLength="131.50" lengthAdjust="spacingAndGlyphs" >{1AD412FF-373E-4FA1-A47A-9BEA39B2A...</text>
<text x="198.40" y="292.55" font-size="8.3" fill="#6d6d6d" font-weight="normal"  textLength="52.66" lengthAdjust="spacingAndGlyphs" >12/11/19 3:33 PM</text>
<text x="283.00" y="292.55" font-size="8.3" fill="#6d6d6d" font-weight="normal"  textLength="35.70" lengthAdjust="spacingAndGlyphs" >THUMB File</text>
<text x="371.24" y="292.55" font-size="8.3" fill="#6d6d6d" font-weight="normal"  textLength="20.46" lengthAdjust="spacingAndGlyphs" >371 KB</text>
<path d="M47.5 296.8 L52 296.8 L54 298.8 L54 306.2 L47.5 306.2 Z" fill="#fff" stroke="#9a9a9a" stroke-width="0.7"/>
<text x="57.50" y="304.8" font-size="8.3" fill="#262626" font-weight="normal"  textLength="131.50" lengthAdjust="spacingAndGlyphs" >{1AF67442-AF09-493F-88EC-E0F6D28266...</text>
<text x="198.40" y="304.8" font-size="8.3" fill="#6d6d6d" font-weight="normal"  textLength="49.41" lengthAdjust="spacingAndGlyphs" >5/20/19 7:58 PM</text>
<text x="283.00" y="304.8" font-size="8.3" fill="#6d6d6d" font-weight="normal"  textLength="30.30" lengthAdjust="spacingAndGlyphs" >ASSET File</text>
<text x="366.04" y="304.8" font-size="8.3" fill="#6d6d6d" font-weight="normal"  textLength="25.66" lengthAdjust="spacingAndGlyphs" >1,208 KB</text>
<path d="M47.5 309.05 L52 309.05 L54 311.05 L54 318.45 L47.5 318.45 Z" fill="#fff" stroke="#9a9a9a" stroke-width="0.7"/><rect x="48.3" y="311.65000000000003" width="5.3" height="5.6" fill="#1f7fe6"/><path d="M49.3 312.65000000000003 L50.95 314.05 L52.6 312.65000000000003" stroke="#fff" stroke-width="0.7" fill="none"/>
<text x="57.50" y="317.05" font-size="8.3" fill="#262626" font-weight="normal"  textLength="131.50" lengthAdjust="spacingAndGlyphs" >{1AF67442-AF09-493F-88EC-E0F6D28266...</text>
<text x="198.40" y="317.05" font-size="8.3" fill="#6d6d6d" font-weight="normal"  textLength="49.41" lengthAdjust="spacingAndGlyphs" >5/20/19 7:58 PM</text>
<text x="283.00" y="317.05" font-size="8.3" fill="#6d6d6d" font-weight="normal"  textLength="35.70" lengthAdjust="spacingAndGlyphs" >THUMB File</text>
<text x="371.24" y="317.05" font-size="8.3" fill="#6d6d6d" font-weight="normal"  textLength="20.46" lengthAdjust="spacingAndGlyphs" >177 KB</text>
<path d="M47.5 321.3 L52 321.3 L54 323.3 L54 330.7 L47.5 330.7 Z" fill="#fff" stroke="#9a9a9a" stroke-width="0.7"/>
<text x="57.50" y="329.3" font-size="8.3" fill="#262626" font-weight="normal"  textLength="131.50" lengthAdjust="spacingAndGlyphs" >{1B35447D-2DC9-4B12-BE82-5851BF3FCE...</text>
<text x="198.40" y="329.3" font-size="8.3" fill="#6d6d6d" font-weight="normal"  textLength="49.41" lengthAdjust="spacingAndGlyphs" >9/19/18 8:59 PM</text>
<text x="283.00" y="329.3" font-size="8.3" fill="#6d6d6d" font-weight="normal"  textLength="30.30" lengthAdjust="spacingAndGlyphs" >ASSET File</text>
<text x="374.71" y="329.3" font-size="8.3" fill="#6d6d6d" font-weight="normal"  textLength="16.99" lengthAdjust="spacingAndGlyphs" >41 KB</text>
<path d="M47.5 333.55 L52 333.55 L54 335.55 L54 342.95 L47.5 342.95 Z" fill="#fff" stroke="#9a9a9a" stroke-width="0.7"/><rect x="48.3" y="336.15000000000003" width="5.3" height="5.6" fill="#1f7fe6"/><path d="M49.3 337.15000000000003 L50.95 338.55 L52.6 337.15000000000003" stroke="#fff" stroke-width="0.7" fill="none"/>
<text x="57.50" y="341.55" font-size="8.3" fill="#262626" font-weight="normal"  textLength="131.50" lengthAdjust="spacingAndGlyphs" >{1B35447D-2DC9-4B12-BE82-5851BF3FCE...</text>
<text x="198.40" y="341.55" font-size="8.3" fill="#6d6d6d" font-weight="normal"  textLength="49.41" lengthAdjust="spacingAndGlyphs" >9/19/18 8:59 PM</text>
<text x="283.00" y="341.55" font-size="8.3" fill="#6d6d6d" font-weight="normal"  textLength="35.70" lengthAdjust="spacingAndGlyphs" >THUMB File</text>
<text x="374.71" y="341.55" font-size="8.3" fill="#6d6d6d" font-weight="normal"  textLength="16.99" lengthAdjust="spacingAndGlyphs" >53 KB</text>
<path d="M47.5 345.8 L52 345.8 L54 347.8 L54 355.2 L47.5 355.2 Z" fill="#fff" stroke="#9a9a9a" stroke-width="0.7"/>
<text x="57.50" y="353.8" font-size="8.3" fill="#262626" font-weight="normal"  textLength="131.50" lengthAdjust="spacingAndGlyphs" >{1C0BCF9A-2D26-488A-811F-9B71FC4FA...</text>
<text x="198.40" y="353.8" font-size="8.3" fill="#6d6d6d" font-weight="normal"  textLength="56.40" lengthAdjust="spacingAndGlyphs" >11/13/19 10:36 PM</text>
<text x="283.00" y="353.8" font-size="8.3" fill="#6d6d6d" font-weight="normal"  textLength="30.30" lengthAdjust="spacingAndGlyphs" >ASSET File</text>
<text x="374.71" y="353.8" font-size="8.3" fill="#6d6d6d" font-weight="normal"  textLength="16.99" lengthAdjust="spacingAndGlyphs" >50 KB</text>
<path d="M47.5 358.05 L52 358.05 L54 360.05 L54 367.45 L47.5 367.45 Z" fill="#fff" stroke="#9a9a9a" stroke-width="0.7"/><rect x="48.3" y="360.65000000000003" width="5.3" height="5.6" fill="#1f7fe6"/><path d="M49.3 361.65000000000003 L50.95 363.05 L52.6 361.65000000000003" stroke="#fff" stroke-width="0.7" fill="none"/>
<text x="57.50" y="366.05" font-size="8.3" fill="#262626" font-weight="normal"  textLength="131.50" lengthAdjust="spacingAndGlyphs" >{1C0BCF9A-2D26-488A-811F-9B71FC4FA...</text>
<text x="198.40" y="366.05" font-size="8.3" fill="#6d6d6d" font-weight="normal"  textLength="56.40" lengthAdjust="spacingAndGlyphs" >11/13/19 10:36 PM</text>
<text x="283.00" y="366.05" font-size="8.3" fill="#6d6d6d" font-weight="normal"  textLength="35.70" lengthAdjust="spacingAndGlyphs" >THUMB File</text>
<text x="374.71" y="366.05" font-size="8.3" fill="#6d6d6d" font-weight="normal"  textLength="16.99" lengthAdjust="spacingAndGlyphs" >18 KB</text>
<path d="M47.5 370.3 L52 370.3 L54 372.3 L54 379.7 L47.5 379.7 Z" fill="#fff" stroke="#9a9a9a" stroke-width="0.7"/>
<text x="57.50" y="378.3" font-size="8.3" fill="#262626" font-weight="normal"  textLength="131.50" lengthAdjust="spacingAndGlyphs" >{1D34EB24-29CF-4533-A10D-2F26EABF76...</text>
<text x="198.40" y="378.3" font-size="8.3" fill="#6d6d6d" font-weight="normal"  textLength="52.29" lengthAdjust="spacingAndGlyphs" >7/21/19 11:28 AM</text>
<text x="283.00" y="378.3" font-size="8.3" fill="#6d6d6d" font-weight="normal"  textLength="30.30" lengthAdjust="spacingAndGlyphs" >ASSET File</text>
<text x="378.18" y="378.3" font-size="8.3" fill="#6d6d6d" font-weight="normal"  textLength="13.52" lengthAdjust="spacingAndGlyphs" >6 KB</text>
<path d="M47.5 382.55 L52 382.55 L54 384.55 L54 391.95 L47.5 391.95 Z" fill="#fff" stroke="#9a9a9a" stroke-width="0.7"/><rect x="48.3" y="385.15000000000003" width="5.3" height="5.6" fill="#1f7fe6"/><path d="M49.3 386.15000000000003 L50.95 387.55 L52.6 386.15000000000003" stroke="#fff" stroke-width="0.7" fill="none"/>
<text x="57.50" y="390.55" font-size="8.3" fill="#262626" font-weight="normal"  textLength="131.50" lengthAdjust="spacingAndGlyphs" >{1D34EB24-29CF-4533-A10D-2F26EABF76...</text>
<text x="198.40" y="390.55" font-size="8.3" fill="#6d6d6d" font-weight="normal"  textLength="52.29" lengthAdjust="spacingAndGlyphs" >7/21/19 11:28 AM</text>
<text x="283.00" y="390.55" font-size="8.3" fill="#6d6d6d" font-weight="normal"  textLength="35.70" lengthAdjust="spacingAndGlyphs" >THUMB File</text>
<text x="374.71" y="390.55" font-size="8.3" fill="#6d6d6d" font-weight="normal"  textLength="16.99" lengthAdjust="spacingAndGlyphs" >10 KB</text>
<path d="M47.5 394.8 L52 394.8 L54 396.8 L54 404.2 L47.5 404.2 Z" fill="#fff" stroke="#9a9a9a" stroke-width="0.7"/>
<text x="57.50" y="402.8" font-size="8.3" fill="#262626" font-weight="normal"  textLength="131.50" lengthAdjust="spacingAndGlyphs" >{1EA1771B-CB0D-45A6-A00D-64395F513...</text>
<text x="198.40" y="402.8" font-size="8.3" fill="#6d6d6d" font-weight="normal"  textLength="53.16" lengthAdjust="spacingAndGlyphs" >12/8/19 12:48 PM</text>
<text x="283.00" y="402.8" font-size="8.3" fill="#6d6d6d" font-weight="normal"  textLength="30.30" lengthAdjust="spacingAndGlyphs" >ASSET File</text>
<text x="371.24" y="402.8" font-size="8.3" fill="#6d6d6d" font-weight="normal"  textLength="20.46" lengthAdjust="spacingAndGlyphs" >423 KB</text>
</g>
<rect x="741" y="106" width="9" height="291.5" fill="#f0f0f0" />
<path d="M743.3 113 L745.4 110.9 L747.5 113" stroke="#333" stroke-width="1.2" fill="none"/>
<rect x="741.5" y="116" width="8" height="12" fill="#cdcdcd" />
<path d="M743.3 393.3 L745.4 395.4 L747.5 393.3" stroke="#333" stroke-width="1.2" fill="none"/>
<text x="8.00" y="408.8" font-size="8.3" fill="#3e5a80" font-weight="normal"  textLength="29.00" lengthAdjust="spacingAndGlyphs" >488 items</text>
<rect x="722.3" y="399.6" width="12.4" height="12.8" fill="#e3f2fc" stroke="#5fb4ec" stroke-width="1"/>
<g><rect x="724.5" y="402" width="1.6" height="1.6" fill="#b8c4cc"/><rect x="724.5" y="405" width="1.6" height="1.6" fill="#9fd49f"/><rect x="724.5" y="408" width="1.6" height="1.6" fill="#e7a0a0"/></g>
<g stroke="#8a9095" stroke-width="0.9"><line x1="727.5" y1="402.8" x2="729.5" y2="402.8"/><line x1="730.5" y1="402.8" x2="733" y2="402.8"/><line x1="727.5" y1="405.8" x2="729.5" y2="405.8"/><line x1="730.5" y1="405.8" x2="733" y2="405.8"/><line x1="727.5" y1="408.8" x2="729.5" y2="408.8"/><line x1="730.5" y1="408.8" x2="733" y2="408.8"/></g>
<rect x="737.3" y="402.3" width="8.4" height="6.8" fill="#dfe6ee" stroke="#b0b4b8" stroke-width="0.6"/>
<rect x="738" y="403" width="7" height="3" fill="#9fd0f5" />
<path d="M738 407 Q740.5 405 745 406.5 L745 408.5 L738 408.5 Z" fill="#1f3a2a"/>
<rect x="0" y="413.3" width="750" height="13" fill="#f0f0f0" />
<text x="1.30" y="423.3" font-size="8.3" fill="#111" font-weight="normal"  textLength="105.20" lengthAdjust="spacingAndGlyphs" >488 items (Disk free space: 489 GB)</text>
<line x1="609.6" y1="413" x2="609.6" y2="426" stroke="#dadada" stroke-width="1" />
<line x1="661" y1="413" x2="661" y2="426" stroke="#dadada" stroke-width="1" />
<text x="612.40" y="423.3" font-size="8.3" fill="#111" font-weight="normal"  textLength="22.60" lengthAdjust="spacingAndGlyphs" >107 MB</text>
<rect x="664" y="415.8" width="9.2" height="6.4" fill="#2a8fe0" stroke="#6a8fb0" stroke-width="0.5"/>
<rect x="667" y="422.4" width="3.2" height="1.2" fill="#777" />
<rect x="665.5" y="423.4" width="6" height="0.8" fill="#999" />
<g fill="#b0b0b0"><rect x="746" y="423.5" width="0.8" height="0.8"/><rect x="748" y="421.5" width="0.8" height="0.8"/><rect x="748" y="423.5" width="0.8" height="0.8"/></g>
<text x="676.00" y="423.3" font-size="8.3" fill="#111" font-weight="normal"  textLength="31.00" lengthAdjust="spacingAndGlyphs" >Computer</text>
<rect x="0" y="426.3" width="750" height="23.7" fill="#fc8600" />
<rect x="159" y="426.3" width="28.8" height="23.7" fill="#fdc99a" />
<g><path d="M3 432 L7 430.5 L9 433.5 L4.5 434.5 Z" fill="#2b2620"/><path d="M15.5 429 L19.5 424.8 L21.5 425.5 L23.5 431.5 L19 434 Z" fill="#2b2620"/><path d="M6.5 431 Q12 426.5 19 429 L23 434 Q22 440 17 441 L8 441 Q5 436 6.5 431 Z" fill="#2b2620"/><ellipse cx="12.8" cy="437.2" rx="6.2" ry="5" fill="#f6f6f2"/><path d="M18 436 L22.5 437 L22 441.5 L17 442.5 Z" fill="#e3c32a"/><path d="M8 441 L17 442 L16 444 L9 444 Z" fill="#b89a20"/><path d="M5.5 442 L10 440.5 L13 443.5 L11 445.5 L6 445 Z" fill="#26221c"/><path d="M13 442 L19 441 L26.5 445.5 L26 448.5 L21 448 Z" fill="#26221c"/><ellipse cx="25.3" cy="446.8" rx="1.6" ry="1.2" fill="#e8e8e8"/><path d="M7.6 420.5 Q8.6 418 10.6 419.5 Z" fill="#222"/><path d="M13 419.5 Q14.8 418 16 420.5 Z" fill="#222"/><ellipse cx="11.8" cy="424" rx="4.5" ry="4.6" fill="#f7f7f5"/><ellipse cx="9.6" cy="423.6" rx="1.4" ry="1.1" fill="#3a3530" transform="rotate(-20 9.6 423.6)"/><ellipse cx="13.6" cy="423.9" rx="1.4" ry="1.1" fill="#3a3530" transform="rotate(20 13.6 423.9)"/><ellipse cx="11.5" cy="425.8" rx="0.9" ry="0.6" fill="#2a2a2a"/></g>
<circle cx="48" cy="436.5" r="3.3" fill="none" stroke="#222" stroke-width="1"/><path d="M45.7 439 L42 443" stroke="#222" stroke-width="1.2"/>
<line x1="63.5" y1="432" x2="63.5" y2="443" stroke="#222" stroke-width="0.9" />
<line x1="66" y1="432" x2="66" y2="443" stroke="#222" stroke-width="0.9" />
<circle cx="87.5" cy="437.5" r="6.2" fill="#db4437"/><path d="M87.5 437.5 L93.7 437.5 A6.2 6.2 0 0 1 84.4 442.9 Z" fill="#f4c20d"/><path d="M87.5 437.5 L84.4 442.9 A6.2 6.2 0 0 1 81.8 435 Z" fill="#0f9d58"/><circle cx="87.5" cy="437.5" r="2.9" fill="#fff"/><circle cx="87.5" cy="437.5" r="2.2" fill="#4285f4"/>
<rect x="109" y="434.4" width="13.2" height="10.2" fill="#111" />
<path d="M112.8 434.6 Q115.6 429.5 118.4 434.6" stroke="#6b4a2a" stroke-width="1.1" fill="none"/>
<rect x="112.3" y="436.3" width="3.1" height="2.9" fill="#f25022" />
<rect x="115.9" y="436.3" width="3.1" height="2.9" fill="#7fba00" />
<rect x="112.3" y="439.6" width="3.1" height="2.9" fill="#00a4ef" />
<rect x="115.9" y="439.6" width="3.1" height="2.9" fill="#ffb900" />
<path d="M138.4 436.5 L144.5 432.8 L151 438.5 L145 442.8 Z" fill="#161616"/><path d="M145 442.8 L151 438.5 L151.6 439.8 L145.6 444 Z" fill="#e8141d"/><path d="M140 436.8 L144.5 434 L146 435.3 L141.5 438 Z" fill="#3a1010"/>
<rect x="167.5" y="432.8" width="5" height="1.6" fill="#e0a93a" />
<rect x="167" y="434.3" width="12.5" height="9.7" fill="#f9d77a" />
<path d="M168.3 443.8 V438.3 H178.2 V443.8 H175.7 V441 H170.8 V443.8 Z" fill="#1e88e5"/>
<rect x="75.6" y="448.7" width="23.200000000000003" height="1.3" fill="#7d8a96" />
<rect x="132.4" y="448.7" width="23.599999999999994" height="1.3" fill="#7d8a96" />
<rect x="159" y="448.7" width="28.80000000000001" height="1.3" fill="#7d8a96" />
<circle cx="619.2" cy="439" r="6" fill="#fff"/><circle cx="619.2" cy="439" r="5" fill="#1b8ad8"/>
<text x="616.30" y="442.6" font-size="10" fill="#fff" font-weight="bold"  textLength="6.00" lengthAdjust="spacingAndGlyphs" >?</text>
<path d="M633.3 440.2 L637 436.8 L640.7 440.2" stroke="#1a1a1a" stroke-width="1.2" fill="none"/>
<path d="M653 433.5 L657 433.5 L657 436 L658.3 436 L658.3 442.5 L652.3 442.5 L652.3 436 L653 436 Z" fill="none" stroke="#222" stroke-width="0.8"/><path d="M658.3 441 L660 442.5" stroke="#222" stroke-width="0.7"/>
<g fill="#111"><rect x="670" y="437" width="9" height="3.5"/><rect x="670.5" y="435.8" width="1.5" height="1.5"/><rect x="674" y="435.8" width="1.5" height="1.5"/></g><rect x="671.5" y="438" width="2" height="1.5" fill="#fc8600"/><rect x="675" y="438" width="2" height="1.5" fill="#fc8600"/>
<path d="M690.3 442 A7.2 7.2 0 0 1 697.5 434.8 M692.1 442 A5.4 5.4 0 0 1 697.5 436.6 M693.9 442 A3.6 3.6 0 0 1 697.5 438.4" stroke="#222" stroke-width="0.8" fill="none"/><circle cx="697" cy="441.5" r="0.8" fill="#222"/>
<text x="707.90" y="435.2" font-size="8.3" fill="#111" font-weight="normal"  textLength="33.10" lengthAdjust="spacingAndGlyphs" >9:15:54 PM</text>
<text x="712.00" y="446.5" font-size="8.3" fill="#111" font-weight="normal"  textLength="25.80" lengthAdjust="spacingAndGlyphs" >12/16/19</text>
<line x1="746.8" y1="426.3" x2="746.8" y2="450" stroke="#e27800" stroke-width="1" />
</svg>
</body></html>
